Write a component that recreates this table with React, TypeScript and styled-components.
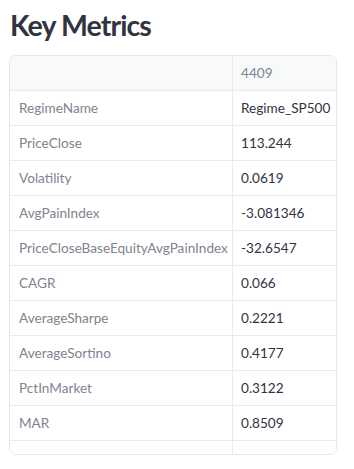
import React from "react";
import styled, { createGlobalStyle } from "styled-components";

const Global = createGlobalStyle`
  html, body { margin: 0; padding: 0; background: #ffffff; }
  body { font-family: Lato, "Noto Sans", sans-serif; -webkit-font-smoothing: antialiased; }
`;

const Page = styled.div`
  width: 354px;
  padding: 0 17px 0 9px;
  box-sizing: border-box;
`;

const Title = styled.h2`
  margin: 0;
  padding: 9px 0 0 1px;
  height: 55px;
  box-sizing: border-box;
  font-family: Lato, "Noto Sans", sans-serif;
  font-weight: 700;
  font-size: 28.5px;
  line-height: 32px;
  color: #31333f;
  letter-spacing: -0.9px;
`;

const TableFrame = styled.div`
  border: 1px solid #e6e7ea;
  border-radius: 7px;
  height: 400px;
  box-sizing: border-box;
  overflow: hidden;
`;

const Row = styled.div<{ $header?: boolean }>`
  display: grid;
  grid-template-columns: 223px 1fr;
  height: 35px;
  box-sizing: border-box;
  border-bottom: 1px solid #e9eaed;
  background: ${(p) => (p.$header ? "#f8f9fb" : "#ffffff")};
`;

const Cell = styled.div<{ $kind: "label" | "value" | "head" }>`
  display: flex;
  align-items: center;
  padding: 0 8px 0 ${(p) => (p.$kind === "label" ? "9px" : "8px")};
  font-size: 13.6px;
  white-space: nowrap;
  overflow: hidden;
  color: ${(p) => (p.$kind === "value" ? "#31333f" : "#808390")};
  border-right: ${(p) => (p.$kind === "value" || p.$kind === "head" ? "none" : "1px solid #e9eaed")};
`;

const rows: [string, string][] = [
  ["RegimeName", "Regime_SP500"],
  ["PriceClose", "113.244"],
  ["Volatility", "0.0619"],
  ["AvgPainIndex", "-3.081346"],
  ["PriceCloseBaseEquityAvgPainIndex", "-32.6547"],
  ["CAGR", "0.066"],
  ["AverageSharpe", "0.2221"],
  ["AverageSortino", "0.4177"],
  ["PctInMarket", "0.3122"],
  ["MAR", "0.8509"],
  ["", ""],
];

export default function App() {
  return (
    <Page>
      <Global />
      <Title>Key Metrics</Title>
      <TableFrame>
        <Row $header>
          <Cell $kind="label" />
          <Cell $kind="head">4409</Cell>
        </Row>
        {rows.map(([k, v], i) => (
          <Row key={i}>
            <Cell $kind="label">{k}</Cell>
            <Cell $kind="value">{v}</Cell>
          </Row>
        ))}
      </TableFrame>
    </Page>
  );
}
